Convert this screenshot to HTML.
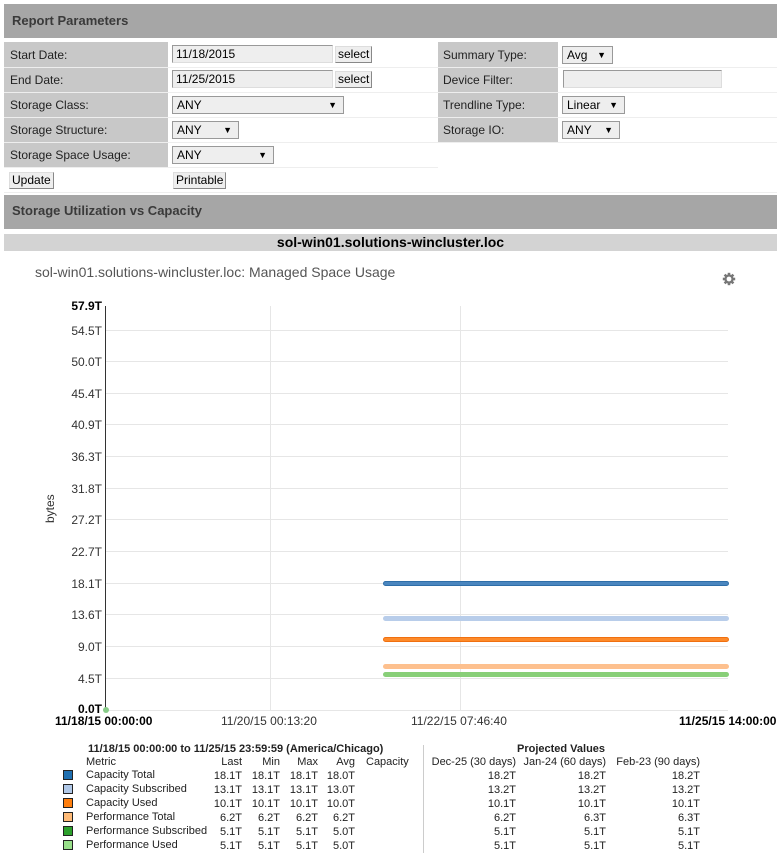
<!DOCTYPE html>
<html><head><meta charset="utf-8"><style>
*{margin:0;padding:0;box-sizing:border-box}
body{width:784px;height:867px;background:#fff;font-family:"Liberation Sans",sans-serif;position:relative;overflow:hidden;color:#000}
.a{position:absolute}
.bar{position:absolute;left:4px;width:773px;background:#a6a6a6;color:#3a3a3a;font-weight:bold;font-size:13px;padding-left:8px}
.lab{position:absolute;background:#c8c8c8;font-size:12px;padding-left:6px;line-height:25px;height:25px}
.row{position:absolute;left:4px;height:1px;background:#eee}
.in{position:absolute;background:#eee;border:1px solid #999;border-right-color:#ddd;border-bottom-color:#ddd;font-size:12px;line-height:16px;padding-left:3px;height:18px}
.sel{position:absolute;background:#eee;border:1px solid #999;font-size:12px;line-height:16px;padding-left:4px;height:18px}
.sel:after{content:"▼";position:absolute;right:6px;top:0;font-size:9px}
.btn{position:absolute;background:#eee;border:1px solid #888;border-left-color:#ddd;border-top-color:#ddd;font-size:12px;line-height:15px;height:17px;padding:0 2px;color:#000}
.yl{position:absolute;right:682px;font-size:12px;color:#333;transform:translateY(-50%)}
.g{position:absolute;left:106px;width:622px;height:1px;background:#e6e6e6}
.ln{position:absolute;left:383px;width:346px;height:5px;border-radius:3px}
.t{position:absolute;font-size:11px;color:#222;white-space:nowrap}
.r{text-align:right}
.sq{position:absolute;left:63px;width:10px;height:10px;border:1px solid #222}
</style></head><body>
<div class="bar" style="top:4px;height:34px;line-height:34px">Report Parameters</div>

<div class="lab" style="left:4px;top:42px;width:164px;height:125px"></div>
<div class="lab" style="left:438px;top:42px;width:120px;height:100px"></div>
<div class="row" style="top:67px;width:773px"></div>
<div class="row" style="top:92px;width:773px"></div>
<div class="row" style="top:117px;width:773px"></div>
<div class="row" style="top:142px;width:773px"></div>
<div class="row" style="top:167px;width:434px"></div>
<div class="row" style="top:192px;width:773px"></div>

<div class="t" style="left:10px;top:48px;font-size:12px">Start Date:</div>
<div class="t" style="left:10px;top:73px;font-size:12px">End Date:</div>
<div class="t" style="left:10px;top:98px;font-size:12px">Storage Class:</div>
<div class="t" style="left:10px;top:123px;font-size:12px">Storage Structure:</div>
<div class="t" style="left:10px;top:148px;font-size:12px">Storage Space Usage:</div>
<div class="t" style="left:443px;top:48px;font-size:12px">Summary Type:</div>
<div class="t" style="left:443px;top:73px;font-size:12px">Device Filter:</div>
<div class="t" style="left:443px;top:98px;font-size:12px">Trendline Type:</div>
<div class="t" style="left:443px;top:123px;font-size:12px">Storage IO:</div>

<div class="in" style="left:172px;top:45px;width:161px">11/18/2015</div>
<div class="btn" style="left:335px;top:46px">select</div>
<div class="in" style="left:172px;top:70px;width:161px">11/25/2015</div>
<div class="btn" style="left:335px;top:71px">select</div>
<div class="sel" style="left:172px;top:96px;width:172px">ANY</div>
<div class="sel" style="left:172px;top:121px;width:67px">ANY</div>
<div class="sel" style="left:172px;top:146px;width:102px">ANY</div>
<div class="sel" style="left:562px;top:46px;width:51px">Avg</div>
<div class="in" style="left:563px;top:70px;width:159px"></div>
<div class="sel" style="left:562px;top:96px;width:63px">Linear</div>
<div class="sel" style="left:562px;top:121px;width:58px">ANY</div>
<div class="btn" style="left:9px;top:172px">Update</div>
<div class="btn" style="left:173px;top:172px">Printable</div>

<div class="bar" style="top:195px;height:34px;line-height:32px">Storage Utilization vs Capacity</div>
<div class="a" style="left:4px;top:234px;width:773px;height:17px;background:#d3d3d3;text-align:center;font-weight:bold;font-size:14px;line-height:17px">sol-win01.solutions-wincluster.loc</div>

<div class="a" style="left:35px;top:264px;font-size:14px;color:#555">sol-win01.solutions-wincluster.loc: Managed Space Usage</div>
<svg class="a" style="left:722px;top:272px" width="14" height="14" viewBox="0 0 14 14"><g fill="#777"><circle cx="7" cy="7" r="4.6"/><rect x="5.7" y="0.8" width="2.6" height="12.4"/><rect x="0.8" y="5.7" width="12.4" height="2.6"/><rect x="5.7" y="0.8" width="2.6" height="12.4" transform="rotate(45 7 7)"/><rect x="5.7" y="0.8" width="2.6" height="12.4" transform="rotate(-45 7 7)"/></g><circle cx="7" cy="7" r="2.4" fill="#fff"/></svg>

<div class="g" style="top:330px"></div><div class="g" style="top:361px"></div><div class="g" style="top:393px"></div><div class="g" style="top:424px"></div><div class="g" style="top:456px"></div><div class="g" style="top:488px"></div><div class="g" style="top:519px"></div><div class="g" style="top:551px"></div><div class="g" style="top:583px"></div><div class="g" style="top:614px"></div><div class="g" style="top:646px"></div><div class="g" style="top:678px"></div><div class="g" style="top:710px"></div>
<div class="a" style="left:270px;top:306px;width:1px;height:404px;background:#e6e6e6"></div>
<div class="a" style="left:460px;top:306px;width:1px;height:404px;background:#e6e6e6"></div>
<div class="a" style="left:105px;top:306px;width:1px;height:405px;background:#333"></div>

<div class="yl" style="top:306px;font-weight:bold;color:#000">57.9T</div>
<div class="yl" style="top:331px">54.5T</div><div class="yl" style="top:362px">50.0T</div><div class="yl" style="top:394px">45.4T</div><div class="yl" style="top:425px">40.9T</div><div class="yl" style="top:457px">36.3T</div><div class="yl" style="top:489px">31.8T</div><div class="yl" style="top:520px">27.2T</div><div class="yl" style="top:552px">22.7T</div><div class="yl" style="top:584px">18.1T</div><div class="yl" style="top:615px">13.6T</div><div class="yl" style="top:647px">9.0T</div><div class="yl" style="top:679px">4.5T</div><div class="yl" style="top:709px;font-weight:bold;color:#000">0.0T</div>
<div class="a" style="left:43px;top:523px;font-size:12px;color:#333;transform:rotate(-90deg);transform-origin:left top">bytes</div>
<div class="a" style="left:103px;top:707px;width:6px;height:6px;border-radius:3px;background:#8c8"></div>

<div class="ln" style="top:581px;background:#4a86bf;border:1px solid #2f6ea8"></div>
<div class="ln" style="top:616px;background:#b8cdea"></div>
<div class="ln" style="top:637px;background:#fd8a2a;border:1px solid #f07010"></div>
<div class="ln" style="top:664px;background:#fdc08e"></div>
<div class="ln" style="top:672px;background:#88cf78"></div>

<div class="a" style="left:55px;top:714px;font-size:12px;font-weight:bold">11/18/15 00:00:00</div>
<div class="a" style="left:221px;top:714px;font-size:12px;color:#333">11/20/15 00:13:20</div>
<div class="a" style="left:411px;top:714px;font-size:12px;color:#333">11/22/15 07:46:40</div>
<div class="a" style="left:679px;top:714px;font-size:12px;font-weight:bold">11/25/15 14:00:00</div>

<div class="t" style="left:88px;top:743px;font-weight:bold">11/18/15 00:00:00 to 11/25/15 23:59:59 (America/Chicago)</div>
<div class="t" style="left:517px;top:743px;font-weight:bold">Projected Values</div>
<div class="a" style="left:423px;top:745px;width:1px;height:108px;background:#ccc"></div>
<div class="t" style="left:86px;top:756px">Metric</div>
<div class="t r" style="left:200px;width:42px;top:756px">Last</div>
<div class="t r" style="left:240px;width:40px;top:756px">Min</div>
<div class="t r" style="left:278px;width:40px;top:756px">Max</div>
<div class="t r" style="left:315px;width:40px;top:756px">Avg</div>
<div class="t" style="left:366px;top:756px">Capacity</div>
<div class="t r" style="left:416px;width:100px;top:756px">Dec-25 (30 days)</div>
<div class="t r" style="left:506px;width:100px;top:756px">Jan-24 (60 days)</div>
<div class="t r" style="left:600px;width:100px;top:756px">Feb-23 (90 days)</div>

<div class="sq" style="top:770px;background:#1f6fb0"></div>
<div class="sq" style="top:784px;background:#b0c8e8"></div>
<div class="sq" style="top:798px;background:#ff7f0e"></div>
<div class="sq" style="top:812px;background:#ffbb78"></div>
<div class="sq" style="top:826px;background:#2ca02c"></div>
<div class="sq" style="top:840px;background:#98df8a"></div>

<div class="t" style="left:86px;top:769px">Capacity Total</div>
<div class="t" style="left:86px;top:783px">Capacity Subscribed</div>
<div class="t" style="left:86px;top:797px">Capacity Used</div>
<div class="t" style="left:86px;top:811px">Performance Total</div>
<div class="t" style="left:86px;top:825px">Performance Subscribed</div>
<div class="t" style="left:86px;top:839px">Performance Used</div>

<div class="t r" style="left:200px;width:42px;top:769px;line-height:14px">18.1T<br>13.1T<br>10.1T<br>6.2T<br>5.1T<br>5.1T</div>
<div class="t r" style="left:240px;width:40px;top:769px;line-height:14px">18.1T<br>13.1T<br>10.1T<br>6.2T<br>5.1T<br>5.1T</div>
<div class="t r" style="left:278px;width:40px;top:769px;line-height:14px">18.1T<br>13.1T<br>10.1T<br>6.2T<br>5.1T<br>5.1T</div>
<div class="t r" style="left:315px;width:40px;top:769px;line-height:14px">18.0T<br>13.0T<br>10.0T<br>6.2T<br>5.0T<br>5.0T</div>
<div class="t r" style="left:416px;width:100px;top:769px;line-height:14px">18.2T<br>13.2T<br>10.1T<br>6.2T<br>5.1T<br>5.1T</div>
<div class="t r" style="left:506px;width:100px;top:769px;line-height:14px">18.2T<br>13.2T<br>10.1T<br>6.3T<br>5.1T<br>5.1T</div>
<div class="t r" style="left:600px;width:100px;top:769px;line-height:14px">18.2T<br>13.2T<br>10.1T<br>6.3T<br>5.1T<br>5.1T</div>
</body></html>
